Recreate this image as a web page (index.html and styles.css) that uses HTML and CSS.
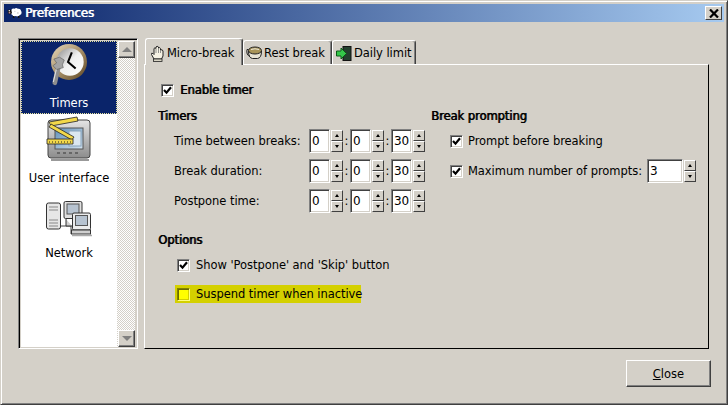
FILE: index.html
```html
<!DOCTYPE html>
<html lang="en">
<head>
    <meta charset="UTF-8">
    <title>Preferences</title>
    <link rel="stylesheet" href="styles.css">
</head>
<body>
    <svg class="defs" width="0" height="0">
        <defs>
            <symbol id="tick" viewBox="0 0 9 9">
                <path d="M1 4 L3.5 6.7 L8 1.2" fill="none" stroke="#000" stroke-width="2.2"/>
            </symbol>
            <linearGradient id="ringGrad" x1="0" y1="0" x2="1" y2="1">
                <stop offset="0" stop-color="#e8dcc0"/>
                <stop offset="0.5" stop-color="#a89068"/>
                <stop offset="1" stop-color="#5a4422"/>
            </linearGradient>
            <linearGradient id="faceGrad" x1="0" y1="0" x2="1" y2="1">
                <stop offset="0" stop-color="#8a8a8a"/>
                <stop offset="0.5" stop-color="#f0f0f0"/>
                <stop offset="1" stop-color="#ffffff"/>
            </linearGradient>
            <linearGradient id="screenGrad" x1="0" y1="0" x2="1" y2="1">
                <stop offset="0" stop-color="#5f8fb8"/>
                <stop offset="1" stop-color="#d4e4f0"/>
            </linearGradient>
            <linearGradient id="caseGrad" x1="0" y1="0" x2="0" y2="1">
                <stop offset="0" stop-color="#e4e4e4"/>
                <stop offset="1" stop-color="#8c8c8c"/>
            </linearGradient>
        </defs>
    </svg>

    <div class="window">
        <div class="titlebar">
            <svg class="title-icon" width="15" height="12" viewBox="0 0 18 14">
                <path d="M5 4 Q6 0.5 9 2 Q11 0 13 2 Q16 1 17 4.5 Q18.5 8 15.5 9.5 Q13 12 10.5 10.5 Q7.5 12 6.5 9.5 Q4 9 5 4Z" fill="#fff"/>
                <path d="M1 3 H5 L6 7 L4.5 8.5 H2 L1 6.5Z" fill="#111"/>
                <rect x="2" y="6" width="2" height="1.5" fill="#e8a8b8"/>
                <rect x="2" y="3.5" width="1.5" height="1.5" fill="#fff"/>
                <path d="M8 10.5v2.5M14 10.5v2.5" stroke="#111" stroke-width="2"/>
                <path d="M9 5h1M12 7h2" stroke="#aaa"/>
            </svg>
            <span class="title-text">Preferences</span>
            <span class="title-close">
                <svg width="10" height="9" viewBox="0 0 10 9"><path d="M1 0.5 L9 8.5 M9 0.5 L1 8.5" stroke="#000" stroke-width="2.2"/></svg>
            </span>
        </div>

        <div class="content">
            <div class="sidebar">
                <ul class="nav-list">
                    <li class="nav-item selected">
                        <svg width="48" height="56" viewBox="0 0 48 56">
                            <circle cx="24" cy="20" r="19" fill="url(#ringGrad)"/>
                            <circle cx="25" cy="20" r="14.5" fill="url(#faceGrad)"/>
                            <path d="M27 10 L23 20 L31 27" fill="none" stroke="#000" stroke-width="2.2"/>
                            <path d="M9 42 L13 24" stroke="#8e8e8e" stroke-width="5" stroke-linecap="round"/>
                            <path d="M7.5 41 L11.5 24" stroke="#e0e0e0" stroke-width="1.2"/>
                            <path d="M8 17 L14 15 L19 18 L17 23 L18 26 L11 28 L7 24 L11 21Z" fill="#a4a4a4" stroke="#555" stroke-width="0.6"/>
                        </svg>
                        <span>Timers</span>
                    </li>
                    <li class="nav-item">
                        <svg width="48" height="46" viewBox="0 0 48 46">
                            <rect x="3" y="4" width="42" height="38" rx="3" fill="url(#caseGrad)" stroke="#444"/>
                            <rect x="10" y="12" width="28" height="21" fill="url(#screenGrad)" stroke="#555"/>
                            <rect x="24" y="15" width="12" height="15" fill="#dbe7f0" stroke="#89a4bc"/>
                            <path d="M12 37h24" stroke="#666" stroke-width="2" stroke-dasharray="3 3"/>
                            <path d="M6 44h38" stroke="#999" stroke-width="2"/>
                            <path d="M4 6 L32 1 L33 5 L6 10Z" fill="#f2d84a" stroke="#222" stroke-width="0.8"/>
                            <path d="M6 8 L29 21 L27 24 L4 11Z" fill="#f2d84a" stroke="#222" stroke-width="0.8"/>
                            <path d="M2 23 H28 V28 H2Z" fill="#f2d84a" stroke="#222" stroke-width="0.8"/>
                            <path d="M4 26h23" stroke="#222" stroke-dasharray="1 2"/>
                        </svg>
                        <span>User interface</span>
                    </li>
                    <li class="nav-item">
                        <svg width="48" height="46" viewBox="0 0 48 46">
                            <g transform="translate(0 10)">
                                <rect x="1.5" y="2" width="14" height="26" rx="2" fill="#e6e6e6" stroke="#333"/>
                                <path d="M4 6h9M4 9h9M4 19h9M4 22h9M4 25h9" stroke="#888"/>
                                <path d="M16 25h10M26 25v8" stroke="#444" fill="none"/>
                                <rect x="19" y="0.5" width="18" height="17" rx="1.5" fill="#e0e0e0" stroke="#333"/>
                                <rect x="22" y="3" width="12" height="10" fill="#b7c3d0" stroke="#555"/>
                                <path d="M21 18v7h6" stroke="#333" fill="#cfcfcf"/>
                                <rect x="27.5" y="12" width="18" height="17" rx="1.5" fill="#ececec" stroke="#333"/>
                                <rect x="30.5" y="14.5" width="12" height="10" fill="#b7c3d0" stroke="#555"/>
                                <rect x="26.5" y="29" width="19" height="4" fill="#cfcfcf" stroke="#333"/>
                                <path d="M27 34.5h20" stroke="#aaa" stroke-width="1.5"/>
                            </g>
                        </svg>
                        <span>Network</span>
                    </li>
                </ul>
                <div class="scrollbar">
                    <span class="scroll-btn"><i class="tri-up"></i></span>
                    <span class="scroll-btn"><i class="tri-down"></i></span>
                </div>
            </div>

            <div class="notebook">
                <div class="tabs">
                    <div class="tab active">
                        <svg width="15" height="17" viewBox="0 0 15 17">
                            <path d="M4 14 L1.5 9.5 Q1 7.5 3 8.5 L4 9.5 V3.5 Q5 2 6 3.5 V2 Q7 0.5 8.5 2 V3 Q10 2 10.5 3.5 V5 Q12.5 4 13 6 V11 L11.5 14Z" fill="#f6f2e4" stroke="#222"/>
                            <path d="M6 4v4M8.5 3v5M10.5 5v3" stroke="#777" stroke-width="0.8"/>
                            <rect x="3.5" y="14" width="8.5" height="2.5" fill="#d8d4c4" stroke="#222" stroke-width="0.8"/>
                        </svg>
                        <span>Micro-break</span>
                    </div>
                    <div class="tab tab-rest">
                        <svg width="17" height="14" viewBox="0 0 17 14">
                            <path d="M2.5 5 Q2.5 12 6.5 12.5 H11.5 Q15.5 12 15.5 5" fill="#e8e4d4" stroke="#222"/>
                            <ellipse cx="9" cy="4.5" rx="6.5" ry="3.5" fill="#a89458" stroke="#222"/>
                            <path d="M5 3.5 Q9 2 13 3.5" stroke="#fff" fill="none" stroke-width="0.8"/>
                            <path d="M2.5 3.5 H1 Q0 9 4 10.5" fill="none" stroke="#222"/>
                        </svg>
                        <span>Rest break</span>
                    </div>
                    <div class="tab tab-limit">
                        <svg width="16" height="15" viewBox="0 0 16 15">
                            <rect x="7" y="0.5" width="8" height="14" fill="#24402e" stroke="#111"/>
                            <path d="M0.5 5 H5 V2 L10.5 7.5 L5 13 V10 H0.5Z" fill="#35c84a" stroke="#0b5a16"/>
                        </svg>
                        <span>Daily limit</span>
                    </div>
                </div>

                <div class="page">
                    <label class="check-row enable">
                        <span class="check"><svg><use href="#tick"/></svg></span>
                        <b>Enable timer</b>
                    </label>

                    <div class="columns">
                        <section class="col-timers">
                            <h3>Timers</h3>
                            <div class="time-row">
                                <span class="time-label">Time between breaks:</span>
                                <span class="spin"><span class="entry">0</span><span class="arrows"><i class="up"></i><i class="down"></i></span></span>
                                <span class="colon">:</span>
                                <span class="spin"><span class="entry">0</span><span class="arrows"><i class="up"></i><i class="down"></i></span></span>
                                <span class="colon">:</span>
                                <span class="spin"><span class="entry">30</span><span class="arrows"><i class="up"></i><i class="down"></i></span></span>
                            </div>
                            <div class="time-row">
                                <span class="time-label">Break duration:</span>
                                <span class="spin"><span class="entry">0</span><span class="arrows"><i class="up"></i><i class="down"></i></span></span>
                                <span class="colon">:</span>
                                <span class="spin"><span class="entry">0</span><span class="arrows"><i class="up"></i><i class="down"></i></span></span>
                                <span class="colon">:</span>
                                <span class="spin"><span class="entry">30</span><span class="arrows"><i class="up"></i><i class="down"></i></span></span>
                            </div>
                            <div class="time-row">
                                <span class="time-label">Postpone time:</span>
                                <span class="spin"><span class="entry">0</span><span class="arrows"><i class="up"></i><i class="down"></i></span></span>
                                <span class="colon">:</span>
                                <span class="spin"><span class="entry">0</span><span class="arrows"><i class="up"></i><i class="down"></i></span></span>
                                <span class="colon">:</span>
                                <span class="spin"><span class="entry">30</span><span class="arrows"><i class="up"></i><i class="down"></i></span></span>
                            </div>
                        </section>

                        <section class="col-prompting">
                            <h3>Break prompting</h3>
                            <div class="prompt-row">
                                <span class="check"><svg><use href="#tick"/></svg></span>
                                <span>Prompt before breaking</span>
                            </div>
                            <div class="prompt-row">
                                <span class="check"><svg><use href="#tick"/></svg></span>
                                <span class="prompt-label">Maximum number of prompts:</span>
                                <span class="spin wide"><span class="entry">3</span><span class="arrows"><i class="up"></i><i class="down"></i></span></span>
                            </div>
                        </section>
                    </div>

                    <section class="options">
                        <h3>Options</h3>
                        <div class="option-row">
                            <span class="check"><svg><use href="#tick"/></svg></span>
                            <span>Show 'Postpone' and 'Skip' button</span>
                        </div>
                        <div class="option-row highlight">
                            <span class="check"></span>
                            <span>Suspend timer when inactive</span>
                        </div>
                    </section>
                </div>
            </div>
        </div>

        <div class="footer">
            <button class="close-btn"><u>C</u>lose</button>
        </div>
    </div>
</body>
</html>
```
FILE: styles.css
```css
* {
    box-sizing: border-box;
}
html, body {
    margin: 0;
    padding: 0;
    overflow: hidden;
}
body {
    font-family: "DejaVu Sans", sans-serif;
    font-size: 11.5px;
    letter-spacing: -0.05px;
    color: #000;
    background-color: #d4d0c8;
}
.defs {
    display: block;
    height: 0;
}
/* the original toolkit fakes bold by smearing the regular face */
h3, b {
    font-weight: normal;
    text-shadow: 0.8px 0 0 #000;
}
h3 {
    margin: 0 0 4px;
    height: 18px;
    line-height: 18px;
    font-size: 11.5px;
}

/* window frame */
.window {
    width: 728px;
    height: 405px;
    display: flex;
    flex-direction: column;
    padding: 3px;
    border: 1px solid;
    border-color: #d4d0c8 #404040 #404040 #d4d0c8;
    box-shadow: inset 1px 1px 0 #fff, inset -1px -1px 0 #808080;
}
.titlebar {
    height: 18px;
    margin: 0 0 16px;
    display: flex;
    align-items: center;
    padding: 0 2px 0 3px;
    background: linear-gradient(to right, #0a246a, #a6caf0);
    color: #fff;
    flex-shrink: 0;
}
.title-icon {
    margin-right: 3px;
}
.title-text {
    font-size: 11.8px;
    text-shadow: 0.8px 0 0 #fff;
}
.title-close {
    margin-left: auto;
    width: 17px;
    height: 14px;
    display: flex;
    align-items: center;
    justify-content: center;
    background-color: #d4d0c8;
    border: 1px solid;
    border-color: #fff #404040 #404040 #fff;
}

/* left list */
.content {
    display: flex;
    padding-left: 14px;
    height: 311px;
    flex-shrink: 0;
}
.sidebar {
    width: 120px;
    height: 311px;
    display: flex;
    border: 1px solid;
    border-color: #808080 #fff #fff #808080;
    box-shadow: inset 1px 1px 0 #000, inset -1px -1px 0 #d4d0c8;
    padding: 2px 2px 1px 2px;
    margin-right: 6px;
}
.nav-list {
    list-style: none;
    margin: 0;
    padding: 0;
    width: 98px;
    background-color: #fff;
}
.nav-item {
    height: 75px;
    display: flex;
    flex-direction: column;
    align-items: center;
    justify-content: flex-end;
    padding-bottom: 4px;
}
.nav-item svg {
    display: block;
    margin-bottom: auto;
    margin-top: 2px;
}
.nav-item.selected {
    height: 73px;
    background-color: #0a246a;
    color: #fff;
    outline: 1px dotted #e8e4a0;
    outline-offset: -1px;
}
.scrollbar {
    width: 18px;
    display: flex;
    flex-direction: column;
    justify-content: space-between;
    background: repeating-conic-gradient(#fff 0 25%, #d4d0c8 0 50%) 0 0 / 2px 2px;
}
.scroll-btn {
    width: 17px;
    height: 17px;
    margin-left: 1px;
    display: flex;
    align-items: center;
    justify-content: center;
    background-color: #d4d0c8;
    border: 1px solid;
    border-color: #fff #404040 #404040 #fff;
    box-shadow: inset -1px -1px 0 #808080;
}
.tri-up {
    border: 5px solid transparent;
    border-top: 0;
    border-bottom: 5px solid #808080;
}
.tri-down {
    border: 5px solid transparent;
    border-bottom: 0;
    border-top: 5px solid #808080;
}

/* notebook */
.notebook {
    width: 565px;
    display: flex;
    flex-direction: column;
}
.tabs {
    height: 26px;
    display: flex;
    align-items: flex-end;
    padding-left: 1px;
}
.tab {
    height: 24px;
    display: flex;
    align-items: center;
    gap: 1px;
    padding: 1px 0 0 2px;
    border: 1px solid;
    border-bottom: 0;
    border-color: #fff #404040 #fff #fff;
    border-top-left-radius: 3px;
    border-top-right-radius: 3px;
    box-shadow: inset -1px 0 0 #808080;
    position: relative;
}
.tab.active {
    height: 27px;
    width: 98px;
    margin-bottom: -1px;
    padding: 2px 0 0 4px;
    gap: 2px;
    background-color: #d4d0c8;
    z-index: 1;
}
.tab-rest {
    width: 89px;
}
.tab-limit {
    width: 84px;
    padding-left: 3px;
    gap: 2px;
}
.page {
    flex: 1;
    border: 1px solid;
    border-color: #fff #000 #000 #fff;
    padding: 15px 0 0 13px;
}
.check-row {
    display: flex;
    align-items: center;
    height: 18px;
    padding-left: 3px;
    gap: 6px;
    margin: 1px 0 8px;
}
.check {
    width: 13px;
    height: 13px;
    display: block;
    flex-shrink: 0;
    background-color: #fff;
    border: 1px solid;
    border-color: #808080 #fff #fff #808080;
    box-shadow: inset 1px 1px 0 #404040, inset -1px -1px 0 #d4d0c8;
    padding: 1px;
}
.check svg {
    display: block;
    width: 9px;
    height: 9px;
}

/* timers and prompting */
.columns {
    display: flex;
}
.col-timers {
    width: 273px;
}
.time-row {
    display: flex;
    align-items: center;
    height: 24px;
    margin-bottom: 6px;
    padding-left: 16px;
}
.time-label {
    width: 135px;
}
.colon {
    width: 7px;
    text-align: center;
}
.spin {
    display: flex;
    height: 24px;
    gap: 1px;
}
.entry {
    width: 21px;
    height: 24px;
    line-height: 22px;
    padding-left: 2px;
    font-size: 12px;
    background-color: #fff;
    border: 1px solid;
    border-color: #808080 #fff #fff #808080;
    box-shadow: inset 1px 1px 0 #404040, inset -1px -1px 0 #d4d0c8;
}
.spin.wide .entry {
    width: 36px;
}
.arrows {
    width: 12px;
    display: flex;
    flex-direction: column;
    padding: 1px 0;
}
.arrows i {
    flex: 1;
    display: flex;
    align-items: center;
    justify-content: center;
    border: 1px solid;
    border-color: #fff #404040 #404040 #fff;
}
.arrows i::before {
    content: "";
    border: 2px solid transparent;
}
.arrows .up::before {
    border-top: 0;
    border-bottom: 3px solid #000;
}
.arrows .down::before {
    border-bottom: 0;
    border-top: 3px solid #000;
}
.prompt-row {
    display: flex;
    align-items: center;
    height: 24px;
    margin-bottom: 6px;
    padding-left: 19px;
    gap: 5px;
}
.prompt-label {
    width: 174px;
    white-space: nowrap;
}

/* options */
.options {
    margin-top: 12px;
}
.options h3 {
    margin-bottom: 7px;
}
.option-row {
    display: flex;
    align-items: center;
    height: 18px;
    width: 186px;
    margin-left: 17px;
    padding-left: 2px;
    gap: 6px;
    white-space: nowrap;
    margin-bottom: 11px;
}
.highlight {
    background-color: #d4d000;
}
.highlight .check {
    background-color: #ffff00;
    border-color: #808000 #ffff80 #ffff80 #808000;
    box-shadow: inset 1px 1px 0 #6a6a00, inset -1px -1px 0 #d4d000;
}

/* bottom button */
.footer {
    display: flex;
    justify-content: flex-end;
    padding: 11px 13px 0 0;
}
.close-btn {
    width: 85px;
    height: 27px;
    font-family: inherit;
    font-size: 11.5px;
    color: #000;
    background-color: #d4d0c8;
    border: 1px solid;
    border-color: #fff #404040 #404040 #fff;
    box-shadow: inset -1px -1px 0 #808080;
    padding: 1px 0 0;
}
```
